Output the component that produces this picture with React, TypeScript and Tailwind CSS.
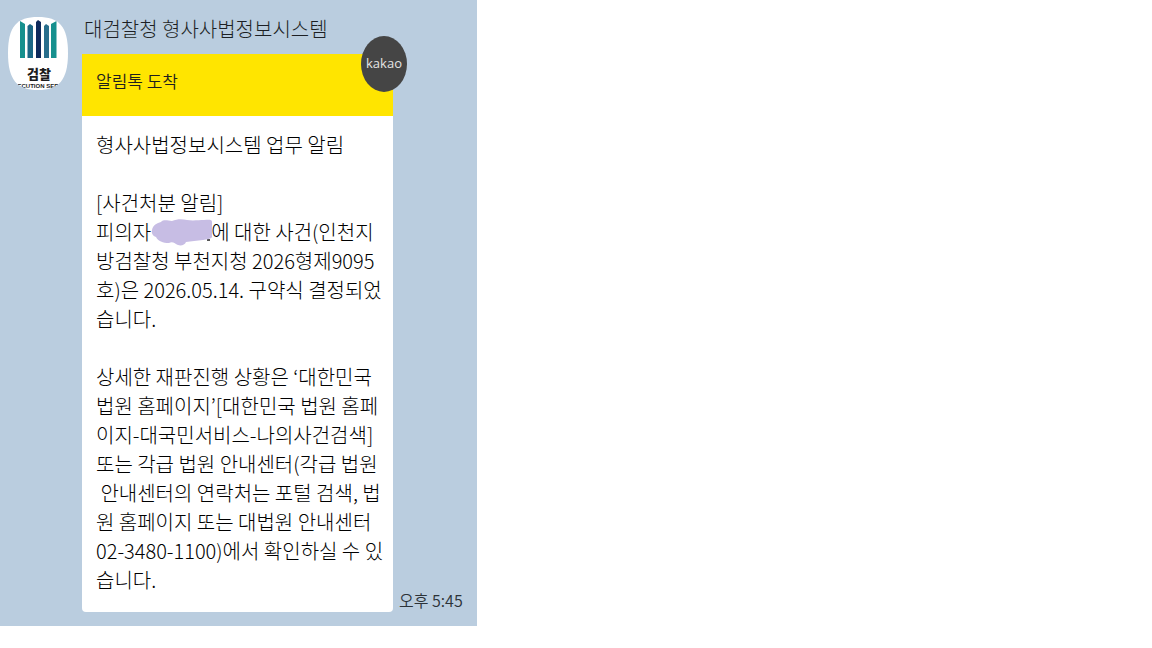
import React from 'react';

const messageFont = "font-['Noto_Sans_CJK_KR',sans-serif]";

type Line = {
    text: string;
    after?: string;
};

// 빈 문자열은 빈 줄
const lines: Line[] = [
    { text: '형사사법정보시스템 업무 알림' },
    { text: '' },
    { text: '[사건처분 알림]' },
    { text: '피의자', after: '에 대한 사건(인천지' },
    { text: '방검찰청 부천지청 2026형제9095' },
    { text: '호)은 2026.05.14. 구약식 결정되었' },
    { text: '습니다.' },
    { text: '' },
    { text: '상세한 재판진행 상황은 ‘대한민국' },
    { text: '법원 홈페이지’[대한민국 법원 홈페' },
    { text: '이지-대국민서비스-나의사건검색]' },
    { text: '또는 각급 법원 안내센터(각급 법원' },
    { text: ' 안내센터의 연락처는 포털 검색, 법' },
    { text: '원 홈페이지 또는 대법원 안내센터' },
    { text: '02-3480-1100)에서 확인하실 수 있' },
    { text: '습니다.' },
];

function ProfileLogo() {
    return (
        <svg
            width="60"
            height="74"
            viewBox="0 0 60 74"
            role="img"
            aria-label="검찰"
            className="block shrink-0"
        >
            <defs>
                <clipPath id="profile">
                    <path d="M30 1C51 1 60 10 60 37S51 74 30 74 0 64 0 37 9 1 30 1Z" />
                </clipPath>
            </defs>
            <g clipPath="url(#profile)">
                <rect width="60" height="74" fill="#fff" />
                <path d="M12 5 17 8V42H12Z" fill="#16908e" />
                <path d="M19.500 10 22 8 25 10V42H19.500Z" fill="#1b6785" />
                <path d="M28 6 30 4 33 6V42H28Z" fill="#0e2a5c" />
                <path d="M36 10 38 8 41 10V42H36Z" fill="#286e8c" />
                <path d="M43 8 48.500 5V42H43Z" fill="#16908e" />
                <text
                    x="31"
                    y="63"
                    textAnchor="middle"
                    fontSize="13"
                    fontWeight="900"
                    fill="#1d1d1d"
                    fontFamily="Noto Sans CJK KR, sans-serif"
                >
                    검찰
                </text>
                <text
                    x="30"
                    y="72"
                    textAnchor="middle"
                    fontSize="6"
                    fontWeight="700"
                    fill="#222"
                    fontFamily="Liberation Sans, sans-serif"
                >
                    ECUTION SER
                </text>
            </g>
        </svg>
    );
}

// 이름 가림 표시
function NameMask() {
    return (
        <svg
            width="62"
            height="28"
            viewBox="0 -1 62 28"
            aria-hidden="true"
            className="-mr-0.5 inline-block align-middle"
        >
            <path d="M56 20H59V22H56Z" fill="#555" />
            <path
                d="M1 11C2 6 6 4 10 3 13 0 17 2 21 2 26 0 31 0 36 1 42 2 48 1 53 1 57 1 61 0 61 3V18C60 20 56 20 52 21 46 22 40 22 35 23 34 26 30 27 27 26 24 25 22 22 18 24 12 24 7 22 5 18 2 17 0 14 1 11Z"
                fill="#c7bde4"
            />
        </svg>
    );
}

function App() {
    return (
        <main
            className={`w-full max-w-[477px] bg-[#bacddf] pb-3.5 pl-2 flex items-start gap-3.5 ${messageFont}`}
        >
            <div className="pt-4">
                <ProfileLogo />
            </div>
            <div className="grow">
                <h1 className="pt-3.5 pb-2.5 pl-0.5 text-xl leading-[30px] font-light text-[#1c1f24]">
                    대검찰청 형사사법정보시스템
                </h1>
                <div className="flex items-end gap-1.5">
                    <article className="relative w-[311px] shrink-0 rounded-b bg-white">
                        <h2 className="bg-[#ffe500] px-3.5 pt-3 pb-5 text-[17px] leading-[30px] font-[350] text-[#1e1e1e]">
                            알림톡 도착
                        </h2>
                        <div className="absolute -top-4.5 -right-3.5 flex h-14 w-[46px] items-center justify-center rounded-[50%] bg-[#454545] font-['Open_Sans',sans-serif] text-[13px] text-[#e4e4e4]">
                            kakao
                        </div>
                        <div className="px-3.5 pt-3.5 pb-4.5 text-xl leading-[29px] font-light text-black">
                            {lines.map((line, i) => (
                                <p key={i} className="flex h-[29px] items-center whitespace-pre">
                                    {line.text}
                                    {line.after ? (
                                        <>
                                            <NameMask />
                                            {line.after}
                                        </>
                                    ) : null}
                                </p>
                            ))}
                        </div>
                    </article>
                    <time dateTime="17:45" className="text-base leading-6 font-[350] whitespace-nowrap text-[#2c3238]">
                        오후 5:45
                    </time>
                </div>
            </div>
        </main>
    );
}

export default App;
